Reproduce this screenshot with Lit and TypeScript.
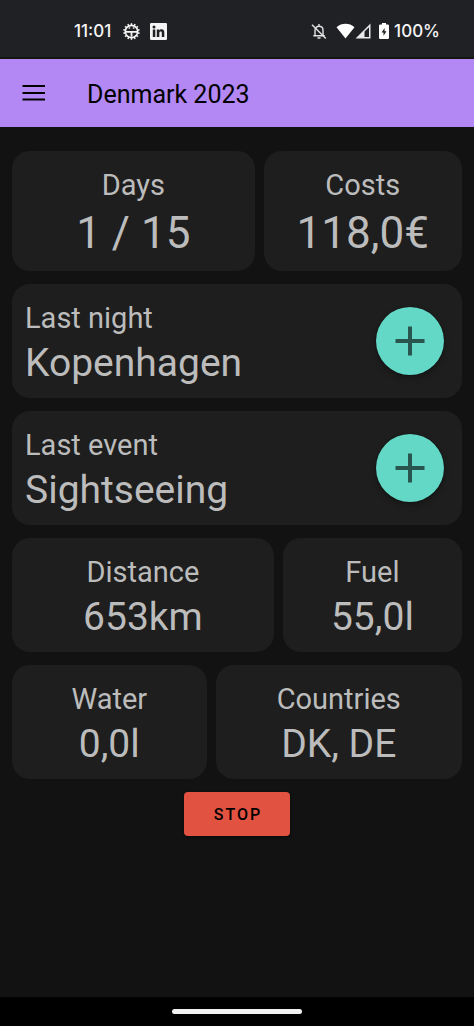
import { LitElement, html, css, svg } from "lit";
import { customElement, property } from "lit/decorators.js";

@customElement("status-bar")
class StatusBar extends LitElement {
  static styles = css`
    :host {
      display: flex;
      justify-content: space-between;
      align-items: center;
      box-sizing: border-box;
      height: 59px;
      padding: 5px 34px 0 74px;
      background: #202124;
      border-bottom: 2px solid #14160f;
      color: #f4f4f4;
      font: 500 17px/20px Inter, sans-serif;
    }
    .group {
      display: flex;
      align-items: center;
    }
    .apps {
      gap: 10px;
    }
    .time {
      margin-right: 2px;
    }
    .muted {
      margin-right: 9px;
    }
    .battery {
      margin: 0 5px 0 8px;
    }
    svg {
      display: block;
    }
  `;

  render() {
    const teeth = Array.from({ length: 14 }, (_, i) => (i * 360) / 14);
    return html`
      <div class="group apps">
        <span class="time">11:01</span>
        <svg width="17" height="17" viewBox="0 0 18 18" fill="none" stroke="#f4f4f4" aria-hidden="true">
          <circle cx="9" cy="9" r="6.500" stroke-width="1.700" />
          ${teeth.map((a) => svg`<path d="M9 .2V3" stroke-width="1.600" transform="rotate(${a} 9 9)" />`)}
          <path d="M3 9.300h12M9 9.300V14.500" stroke-width="1.900" />
          <path d="M6 5.300h1.600M10.400 5.300H12" stroke-width="1.400" />
        </svg>
        <svg width="17" height="17" viewBox="0 0 17 17" aria-hidden="true">
          <rect width="17" height="17" rx="1.300" fill="#f4f4f4" />
          <circle cx="4" cy="4" r="1.500" fill="#202124" />
          <path d="M2.800 6.500h2.500V14H2.800ZM6.800 6.500h2.400v1.100C9.700 6.800 10.600 6.300 11.600 6.300c2.100 0 2.700 1.400 2.700 3.400V14h-2.500v-3.900c0-1-.2-1.700-1.100-1.700-1 0-1.400.7-1.400 1.700V14H6.800Z" fill="#202124" />
        </svg>
      </div>
      <div class="group">
        <svg class="muted" width="16" height="17" viewBox="0 0 16 17" fill="none" stroke="#e4e4e4" stroke-width="1.400" aria-hidden="true">
          <path d="M4 12.500V7.200C4 4.900 5.700 3.300 8 3.300s4 1.600 4 3.900v5.300M2.300 12.700h11.400M8 1v2.200M6.500 15h3" />
          <path d="M1 1.800l13.800 13.800" />
        </svg>
        <svg width="19" height="16" viewBox="0 0 19 16" aria-hidden="true">
          <path d="M.5 4.200C5.600-.3 13.400-.3 18.500 4.200L9.500 15.500Z" fill="#fff" />
        </svg>
        <svg width="16" height="16" viewBox="0 0 16 16" aria-hidden="true">
          <path d="M15.500.5v15H.5ZM9.500 8.500v5.500H14V4.200Z" fill="#e8e8e8" fill-rule="evenodd" />
        </svg>
        <svg class="battery" width="10" height="16" viewBox="0 0 10 16" aria-hidden="true">
          <path d="M3 0h4v1.600h1.800Q10 1.600 10 2.800v12Q10 16 8.800 16H1.200Q0 16 0 14.800v-12Q0 1.600 1.200 1.600H3Z" fill="#fff" />
          <path d="M5.600 5L2.600 9.500h1.900v3.200L7.500 8.300H5.600Z" fill="#202124" />
        </svg>
        <span>100%</span>
      </div>
    `;
  }
}

@customElement("stat-card")
class StatCard extends LitElement {
  @property() label = "";
  @property() value = "";
  @property({ type: Boolean, reflect: true }) large = false;
  @property({ type: Boolean, reflect: true }) addable = false;

  static styles = css`
    :host {
      display: flex;
      align-items: center;
      justify-content: center;
      border-radius: 18px;
      background: #1e1e1e;
      color: #bcbcbc;
      text-align: center;
    }
    :host([addable]) {
      justify-content: space-between;
      padding: 0 18px 0 13px;
      text-align: left;
    }
    .text {
      display: flex;
      flex-direction: column;
      gap: 5px;
      padding: 17px 0 12px;
    }
    .label {
      font-size: 29px;
      line-height: 34px;
    }
    .value {
      font-size: 39px;
      line-height: 46px;
    }
    :host([large]) .value {
      font-size: 44px;
      line-height: 52px;
    }
    .add {
      display: grid;
      place-items: center;
      width: 68px;
      height: 68px;
      padding: 0;
      border: 0;
      border-radius: 50%;
      background: #64d8c6;
      box-shadow: 0 3px 6px rgba(0, 0, 0, 0.3), 0 0 1px #000;
      cursor: pointer;
    }
  `;

  render() {
    return html`
      <div class="text">
        <span class="label">${this.label}</span>
        <span class="value">${this.value}</span>
      </div>
      ${this.addable
        ? html`<button class="add" aria-label="Add ${this.label}">
            <svg width="30" height="30" viewBox="0 0 30 30" aria-hidden="true">
              <path d="M15 .5v29M.5 15h29" stroke="#28564f" stroke-width="4" />
            </svg>
          </button>`
        : ""}
    `;
  }
}

@customElement("app-root")
class AppRoot extends LitElement {
  static styles = css`
    :host {
      display: flex;
      flex-direction: column;
      min-height: 100vh;
      background: #121212;
      font-family: Roboto, sans-serif;
    }
    .appbar {
      display: flex;
      align-items: center;
      gap: 38px;
      height: 68px;
      padding: 0 19px;
      background: #b388f5;
      color: #000;
    }
    .menu {
      padding: 0;
      border: 0;
      background: none;
      cursor: pointer;
    }
    .menu svg {
      display: block;
    }
    .title {
      margin: 0;
      padding-top: 3px;
      font-size: 25px;
      line-height: 28px;
      font-weight: 400;
    }
    main {
      flex: 1;
      display: flex;
      flex-direction: column;
      gap: 13px;
      padding: 24px 12px;
    }
    .row {
      display: grid;
      gap: 9px;
    }
    .trip {
      grid-template-columns: 11fr 9fr;
    }
    .travel {
      grid-template-columns: 19fr 13fr;
    }
    .places {
      grid-template-columns: 15fr 19fr;
    }
    .stop {
      align-self: center;
      height: 44px;
      padding: 1px 28px 0 30px;
      border: 0;
      border-radius: 4px;
      background: #e25241;
      box-shadow: 0 1px 3px rgba(0, 0, 0, 0.6);
      color: #000;
      font: 500 16px/20px Roboto, sans-serif;
      letter-spacing: 2px;
      cursor: pointer;
    }
    .navbar {
      display: flex;
      justify-content: center;
      align-items: center;
      height: 29px;
      background: #000;
    }
    .handle {
      width: 130px;
      height: 5px;
      border-radius: 3px;
      background: #f1f1f1;
    }
  `;

  render() {
    return html`
      <status-bar></status-bar>
      <header class="appbar">
        <button class="menu" aria-label="Menu">
          <svg width="30" height="30" viewBox="0 0 30 30" aria-hidden="true">
            <path d="M3.500 8h22.500M3.500 15h22.500M3.500 21.500h22.500" stroke="#000" stroke-width="2.200" />
          </svg>
        </button>
        <h1 class="title">Denmark 2023</h1>
      </header>
      <main>
        <div class="row trip">
          <stat-card large label="Days" value="1 / 15"></stat-card>
          <stat-card large label="Costs" value="118,0€"></stat-card>
        </div>
        <stat-card addable label="Last night" value="Kopenhagen"></stat-card>
        <stat-card addable label="Last event" value="Sightseeing"></stat-card>
        <div class="row travel">
          <stat-card label="Distance" value="653km"></stat-card>
          <stat-card label="Fuel" value="55,0l"></stat-card>
        </div>
        <div class="row places">
          <stat-card label="Water" value="0,0l"></stat-card>
          <stat-card label="Countries" value="DK, DE"></stat-card>
        </div>
        <button class="stop">STOP</button>
      </main>
      <footer class="navbar"><div class="handle"></div></footer>
    `;
  }
}
